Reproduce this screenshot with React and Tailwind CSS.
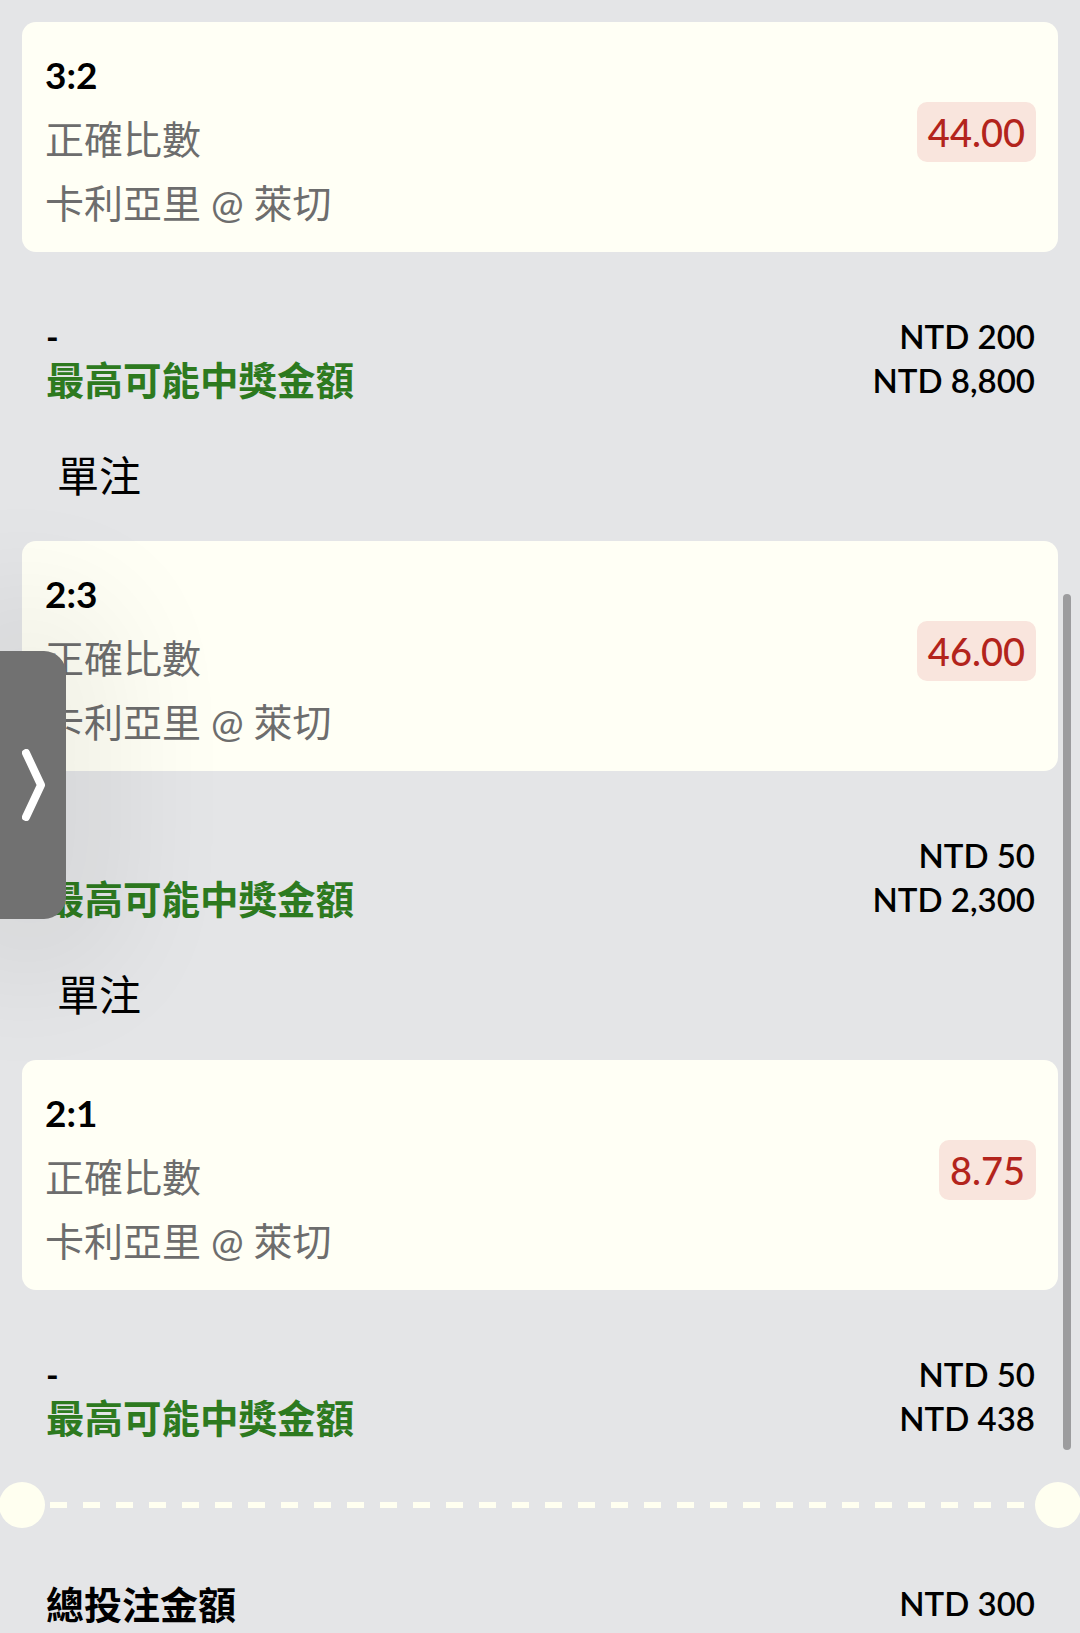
import React from 'react';

const bets = [
  { score: '3:2', market: '正確比數', match: '卡利亞里 @ 萊切', odds: '44.00', stake: 'NTD 200', payout: 'NTD 8,800' },
  { score: '2:3', market: '正確比數', match: '卡利亞里 @ 萊切', odds: '46.00', stake: 'NTD 50', payout: 'NTD 2,300' },
  { score: '2:1', market: '正確比數', match: '卡利亞里 @ 萊切', odds: '8.75', stake: 'NTD 50', payout: 'NTD 438' },
];

const BetCard = ({ bet }) => (
  <div className="h-[230px] bg-[#fffff5] rounded-[14px] pl-[23px] pr-[22px] pt-[21px] pb-[17px] flex items-center justify-between">
    <div className="flex flex-col">
      <span className="h-[64px] flex items-center text-[37px] font-bold text-black">{bet.score}</span>
      <span className="h-[64px] flex items-center text-[39px] text-[#6d6d6d]">{bet.market}</span>
      <span className="h-[64px] flex items-center text-[39px] text-[#6d6d6d]">{bet.match}</span>
    </div>
    <div className="h-[60px] px-[11px] rounded-[10px] bg-[#f9e5dd] flex items-center text-[38px] font-medium text-[#b3241c] mt-[-14px]">
      {bet.odds}
    </div>
  </div>
);

const BetSummary = ({ bet }) => (
  <div className="mt-[63px] pl-[24px] pr-[23px] flex flex-col">
    <div className="h-[44px] flex items-center justify-between">
      <span className="text-[34px] font-bold text-black leading-none">-</span>
      <span className="text-[33px] font-semibold text-black">{bet.stake}</span>
    </div>
    <div className="h-[44px] flex items-center justify-between">
      <span className="text-[38.5px] font-bold text-[#2d7a1f]">最高可能中獎金額</span>
      <span className="text-[33px] font-semibold text-black">{bet.payout}</span>
    </div>
  </div>
);

export default function App() {
  return (
    <div className="relative w-full h-[1633px] overflow-hidden bg-[#e4e5e7] font-[Lato,'Noto_Sans_CJK_TC',sans-serif]">
      <div className="px-[22px] pt-[22px] flex flex-col">
        {bets.map((bet, i) => (
          <div key={i} className="flex flex-col">
            {i > 0 && (
              <>
                <div className="mt-[45px] h-[56px] pl-[35px] flex items-center text-[42px] text-black">單注</div>
                <div className="h-[37px]"></div>
              </>
            )}
            <BetCard bet={bet} />
            <BetSummary bet={bet} />
          </div>
        ))}

        {/* ticket divider */}
        <div className="mt-[41px] h-[46px] flex items-center">
          <div className="w-[46px] h-[46px] -ml-[23px] rounded-full bg-[#fffff0] shrink-0"></div>
          <div className="flex-1 mx-[5px] h-[6px] bg-[repeating-linear-gradient(90deg,#fffff0_0_17px,transparent_17px_33px)]"></div>
          <div className="w-[46px] h-[46px] -mr-[23px] rounded-full bg-[#fffff0] shrink-0"></div>
        </div>

        <div className="mt-[54px] h-[44px] pl-[24px] pr-[23px] flex items-center justify-between">
          <span className="text-[38px] font-bold text-black">總投注金額</span>
          <span className="text-[33px] font-semibold text-black">NTD 300</span>
        </div>
      </div>

      {/* side drawer tab */}
      <div className="absolute left-0 top-[651px] w-[66px] h-[268px] bg-[#717171] rounded-r-[22px] flex items-center justify-center shadow-[0_0_120px_60px_rgba(0,0,0,0.06)]">
        <svg width="23" height="72" viewBox="0 0 23 72" fill="none">
          <polyline points="4,4 19,36 4,68" stroke="#ffffff" strokeWidth="8" strokeLinecap="round" strokeLinejoin="round" />
        </svg>
      </div>

      {/* scrollbar */}
      <div className="absolute right-[9px] top-[594px] w-[8px] h-[856px] rounded-full bg-[#9c9c9e]"></div>
    </div>
  );
}
